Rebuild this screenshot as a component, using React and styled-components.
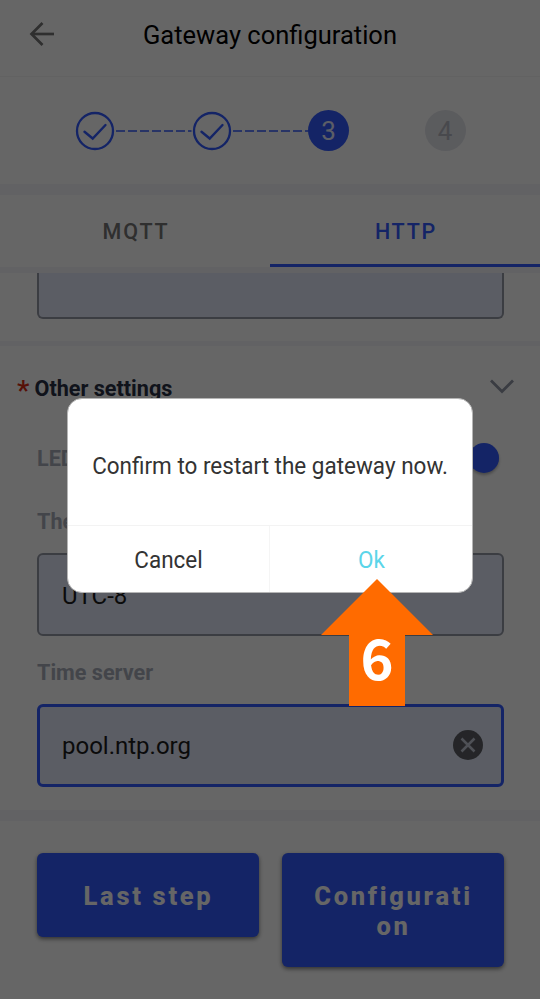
import React from "react";
import styled, { createGlobalStyle } from "styled-components";

const BLUE = "#325aff";
const BAND = "#f5f5fa";

const GlobalStyle = createGlobalStyle`
  *, *::before, *::after { box-sizing: border-box; }
  body { margin: 0; background: #fff; font-family: Roboto, "Liberation Sans", sans-serif; }
  button, input { font: inherit; border: 0; padding: 0; margin: 0; background: none; outline: 0; }
`;

const Screen = styled.div`
  position: relative;
  width: 540px;
  height: 999px;
  overflow: hidden;
  background: #fff;
  display: flex;
  flex-direction: column;
`;

const Header = styled.header`
  height: 77px;
  flex: none;
  display: grid;
  grid-template-columns: 84px 1fr 84px;
  align-items: center;
  padding-bottom: 9px;
  border-bottom: 1px solid #f5f5f5;
`;

const BackButton = styled.button`
  display: flex;
  justify-content: center;
  svg { display: block; }
`;

const Title = styled.h1`
  margin: 0;
  text-align: center;
  font-weight: 400;
  font-size: 25.5px;
  line-height: 30px;
  padding-top: 2px;
  color: #000;
`;

const Steps = styled.div`
  height: 107px;
  flex: none;
  display: flex;
  align-items: center;
  padding-left: 75px;
`;

const StepDone = styled.svg`
  display: block;
  flex: none;
  width: 40px;
  height: 40px;
`;

const Connector = styled.svg`
  display: block;
  flex: none;
  width: ${(p) => p.$width}px;
  height: 2px;
  overflow: visible;
`;

const StepDot = styled.div`
  width: 41px;
  height: 41px;
  flex: none;
  border-radius: 50%;
  display: flex;
  align-items: center;
  justify-content: center;
  font-size: 26px;
  line-height: 30px;
  padding-top: 1px;
  margin-left: ${(p) => p.$gap || 0}px;
  background: ${(p) => (p.$active ? BLUE : "#e4e5ec")};
  color: ${(p) => (p.$active ? "#e6eaff" : "#b4b6c0")};
`;

const Band = styled.div`
  flex: none;
  height: ${(p) => p.$height}px;
  background: ${BAND};
`;

const Tabs = styled.div`
  height: 72px;
  flex: none;
  display: grid;
  grid-template-columns: 1fr 1fr;
`;

const Tab = styled.button`
  font-size: 21.5px;
  font-weight: 500;
  letter-spacing: 1.8px;
  padding: 4px 0 0 2px;
  border-bottom: 3px solid ${(p) => (p.$active ? BLUE : "transparent")};
  color: ${(p) => (p.$active ? BLUE : "#757575")};
`;

const Panel = styled.section`
  flex: none;
  height: ${(p) => p.$height}px;
  padding: 0 36px 0 37px;
  display: flex;
  flex-direction: column;
  overflow: hidden;
`;

const ClippedField = styled.div`
  height: 46px;
  border: 2px solid #9498a5;
  border-top: 0;
  border-radius: 0 0 6px 6px;
  background: #e4e9fa;
`;

const SectionHead = styled.div`
  height: 82px;
  flex: none;
  display: flex;
  align-items: center;
  margin-left: -20px;
  margin-right: -10px;
  padding-top: 1px;
  svg { margin-bottom: 3px; }
`;

const Star = styled.span`
  width: 17.5px;
  font-size: 28px;
  font-weight: 500;
  line-height: 24px;
  padding-top: 6px;
  color: #d92b12;
`;

const SectionTitle = styled.h2`
  margin: 0;
  flex: 1;
  padding-top: 1px;
  font-size: 21.6px;
  font-weight: 700;
  color: #283044;
`;

const Row = styled.div`
  height: ${(p) => p.$height}px;
  flex: none;
  display: flex;
  align-items: center;
  justify-content: space-between;
`;

const Label = styled.label`
  font-size: 21.6px;
  line-height: 26px;
  font-weight: 700;
  padding-top: ${(p) => p.$drop || 2}px;
  color: #a8adba;
`;

const Switch = styled.div`
  width: 56px;
  height: 22px;
  border-radius: 11px;
  background: #adbdff;
  display: flex;
  align-items: center;
  justify-content: flex-end;
  margin-right: 5px;
`;

const Thumb = styled.div`
  width: 30px;
  height: 30px;
  flex: none;
  border-radius: 50%;
  background: ${BLUE};
  box-shadow: 0 2px 3px rgba(0, 0, 0, 0.3);
`;

const Field = styled.div`
  height: 83px;
  flex: none;
  display: flex;
  align-items: center;
  justify-content: space-between;
  padding: ${(p) => (p.$focused ? "0 18px 2px 22px" : "0 18px 0 23px")};
  border: ${(p) => (p.$focused ? `3px solid ${BLUE}` : "2px solid #9498a5")};
  border-radius: 6px;
  background: #e4e9fa;
`;

const FieldInput = styled.input`
  flex: 1;
  min-width: 0;
  font-size: 24px;
  line-height: 28px;
  padding-top: 2px;
  color: #1c1c1c;
`;

const Footer = styled.footer`
  flex: 1;
  display: grid;
  grid-template-columns: 222px 222px;
  column-gap: 23px;
  align-items: start;
  padding: 32px 36px 0 36.5px;
`;

const ActionButton = styled.button`
  min-height: 84px;
  padding: 28px 30px 26px 32px;
  border-radius: 6px;
  background: ${BLUE};
  color: #fff;
  font-size: 25.5px;
  line-height: 30px;
  font-weight: 800;
  letter-spacing: 2.7px;
  word-break: break-all;
  box-shadow: 0 2px 4px rgba(0, 0, 0, 0.5);
`;

const Overlay = styled.div`
  position: absolute;
  inset: 0;
  background: rgba(0, 0, 0, 0.6);
`;

const Dialog = styled.div`
  position: absolute;
  left: 67px;
  top: 398px;
  width: 406px;
  height: 195px;
  border-radius: 15px;
  background: #fff;
  border: 1px solid #b5b5b5;
  display: grid;
  grid-template-rows: 126px 1fr;
  overflow: hidden;
`;

const Message = styled.p`
  margin: 0;
  display: flex;
  align-items: center;
  justify-content: center;
  white-space: nowrap;
  padding-top: 7px;
  font-size: 24px;
  color: #333;
  transform: scaleX(0.937);
`;

const DialogActions = styled.div`
  display: grid;
  grid-template-columns: 201px 1fr;
  border-top: 1px solid #f3f3f3;
`;

const DialogButton = styled.button`
  font-size: 24px;
  padding-top: 2px;
  color: ${(p) => (p.$primary ? "#5bd5e9" : "#333")};
  & + & { border-left: 1px solid #f5f5f5; }
`;

const ButtonText = styled.span`
  display: inline-block;
  transform: scaleX(0.937);
`;

const Callout = styled.div`
  position: absolute;
  left: 321px;
  top: 579px;
  width: 112px;
  height: 127px;
  padding-top: 31px;
  text-align: center;
  clip-path: polygon(50% 0, 100% 56px, 84px 56px, 84px 100%, 28px 100%, 28px 56px, 0 56px);
  background: #ff6b00;
  color: #fff;
  font-family: "Noto Sans CJK SC", "Noto Sans", sans-serif;
  font-weight: 700;
  font-size: 56px;
  line-height: 92px;
`;

const CompletedStep = () => (
  <StepDone viewBox="0 0 40 40" fill="none" stroke={BLUE}>
    <circle cx="20" cy="20" r="18" strokeWidth="2.3" />
    <path d="M9.5 20.8 L17.7 27.5 L30.5 14" strokeWidth="2.4" strokeLinecap="round" />
  </StepDone>
);

const Dashes = ({ width }) => (
  <Connector $width={width} stroke={BLUE} strokeWidth="1.7">
    <line x1="1" y1="1" x2={width} y2="1" strokeDasharray="9 3" />
  </Connector>
);

export default function App() {
  return (
    <>
      <GlobalStyle />
      <Screen>
        <Header>
          <BackButton aria-label="Back">
            <svg width="26" height="26" viewBox="0 0 26 26" fill="none" stroke="#757575" strokeWidth="2.7">
              <path d="M25 13 H3" />
              <path d="M13.5 2 L2.5 13 L13.5 24" />
            </svg>
          </BackButton>
          <Title>Gateway configuration</Title>
        </Header>
        <Steps>
          <CompletedStep />
          <Dashes width={76.5} />
          <CompletedStep />
          <Dashes width={76.5} />
          <StepDot $active>3</StepDot>
          <StepDot $gap={75.5}>4</StepDot>
        </Steps>
        <Band $height={11} />
        <Tabs>
          <Tab>MQTT</Tab>
          <Tab $active>HTTP</Tab>
        </Tabs>
        <Band $height={6} />
        <Panel $height={68}>
          <ClippedField />
        </Panel>
        <Band $height={5} />
        <Panel $height={464}>
          <SectionHead>
            <Star>*</Star>
            <SectionTitle>Other settings</SectionTitle>
            <svg width="24" height="16" viewBox="0 0 24 16" fill="none" stroke="#9297a6" strokeWidth="2.8">
              <path d="M1 2.5 L12 13.5 L23 2.5" />
            </svg>
          </SectionHead>
          <Row $height={60}>
            <Label>LED</Label>
            <Switch><Thumb /></Switch>
          </Row>
          <Row $height={65}>
            <Label>The time zone</Label>
          </Row>
          <Field>
            <FieldInput readOnly value="UTC-8" />
          </Field>
          <Row $height={68}>
            <Label $drop={5}>Time server</Label>
          </Row>
          <Field $focused>
            <FieldInput readOnly value="pool.ntp.org" />
            <svg width="30" height="30" viewBox="0 0 30 30">
              <circle cx="15" cy="15" r="15" fill="#5c5e64" />
              <path d="M8.5 8.5 L21.5 21.5 M21.5 8.5 L8.5 21.5" stroke="#c4c8d6" strokeWidth="2.5" />
            </svg>
          </Field>
        </Panel>
        <Band $height={11} />
        <Footer>
          <ActionButton>Last step</ActionButton>
          <ActionButton>Configuration</ActionButton>
        </Footer>
        <Overlay />
        <Dialog role="dialog">
          <Message>Confirm to restart the gateway now.</Message>
          <DialogActions>
            <DialogButton><ButtonText>Cancel</ButtonText></DialogButton>
            <DialogButton $primary><ButtonText>Ok</ButtonText></DialogButton>
          </DialogActions>
        </Dialog>
        <Callout>6</Callout>
      </Screen>
    </>
  );
}
